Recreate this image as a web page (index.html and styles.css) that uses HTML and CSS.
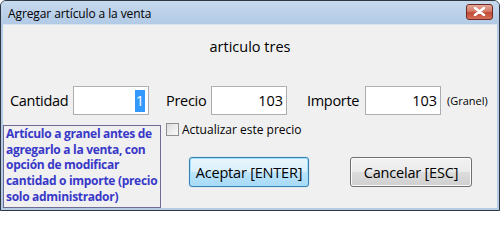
FILE: index.html
```html
<!DOCTYPE html>
<html lang="es">
<head>
<meta charset="utf-8">
<title>Agregar artículo a la venta</title>
<link rel="stylesheet" href="styles.css">
</head>
<body>
<div class="window">
  <div class="titlebar">
    <span class="title">Agregar artículo a la venta</span>
    <span class="close"><svg width="13" height="9" viewBox="0 0 13 9"><path d="M2 1 L11 8 M11 1 L2 8" stroke="#fff" stroke-width="2.4" stroke-linecap="round"/></svg></span>
  </div>
  <div class="content">
    <div class="heading">articulo tres</div>
    <div class="row">
      <span class="lbl lbl-cant">Cantidad</span>
      <span class="field"><span class="sel">1</span></span>
      <span class="lbl lbl-precio">Precio</span>
      <span class="field">103</span>
      <span class="lbl lbl-imp">Importe</span>
      <span class="field">103</span>
      <span class="granel">(Granel)</span>
    </div>
    <div class="lower">
      <div class="note">Artículo a granel antes de<br>agregarlo a la venta, con<br>opción de modificar<br>cantidad o importe (precio<br>solo administrador)</div>
      <div class="actions">
        <label class="check"><span class="box"></span>Actualizar este precio</label>
        <div class="buttons">
          <span class="btn btn-default">Aceptar [ENTER]</span>
          <span class="btn">Cancelar [ESC]</span>
        </div>
      </div>
    </div>
  </div>
</div>
</body>
</html>
```

FILE: styles.css
```css
html, body {
  margin: 0;
  padding: 0;
  background: #ffffff;
}
body {
  font-family: "Open Sans", "Noto Sans", sans-serif;
  color: #000;
}
.window {
  width: 500px;
  height: 211px;
  box-sizing: border-box;
  border: 1px solid #2f3640;
  border-radius: 6px 6px 0 0;
  background: #b4cbe6;
  display: flex;
  flex-direction: column;
  padding: 0 2px 2px 2px;
  overflow: hidden;
}
.titlebar {
  height: 23px;
  flex: none;
  display: flex;
  align-items: center;
  justify-content: space-between;
  background: linear-gradient(#c6d9ee, #b2cae5);
  margin: 0 -2px;
  padding: 0 6px 0 7px;
}
.title {
  font-size: 12px;
  color: #000;
  letter-spacing: -0.1px;
  margin-top: 1px;
}
.close {
  width: 27px;
  height: 16px;
  margin-top: -2px;
  box-sizing: border-box;
  border: 1px solid #6e2a22;
  border-radius: 3px;
  background: linear-gradient(#e8a898 0%, #d47a68 45%, #c04a36 55%, #d67058 100%);
  display: flex;
  align-items: center;
  justify-content: center;
}
.content {
  flex: 1;
  background: #f0f0f0;
  border-top: 1px solid #d8e4f2;
  display: flex;
  flex-direction: column;
  position: relative;
}
.heading {
  text-align: center;
  font-size: 14.5px;
  line-height: 20px;
  margin-top: 12px;
}
.row {
  display: flex;
  align-items: center;
  height: 29px;
  margin-top: 29px;
  padding-left: 7px;
  font-size: 14.5px;
}
.lbl {
  flex: none;
  white-space: nowrap;
  letter-spacing: -0.3px;
}
.lbl-cant { width: 63px; }
.lbl-precio { width: 45px; margin-left: 17px; }
.lbl-imp { width: 58px; margin-left: 20px; }
.field {
  flex: none;
  width: 76px;
  height: 29px;
  box-sizing: border-box;
  border: 1px solid #abadb3;
  border-top-color: #adb2b5;
  background: #fff;
  display: flex;
  align-items: center;
  justify-content: flex-end;
  padding-right: 3px;
}
.sel {
  background: #3399ff;
  color: #fff;
  padding: 0 1px;
  line-height: 22px;
}
.granel {
  font-size: 11px;
  margin-left: 6px;
}
.lower {
  display: grid;
  grid-template-columns: 158px 1fr;
  margin-top: 8px;
  flex: 1;
}
.note {
  margin-top: 2px;
  border: 1px solid #6c6c94;
  color: #3838c8;
  font-family: "Open Sans", "Noto Sans", sans-serif;
  font-weight: bold;
  font-size: 12px;
  letter-spacing: -0.3px;
  line-height: 15.7px;
  padding: 0 1px 0 2px;
  white-space: nowrap;
  overflow: hidden;
}
.actions {
  padding-left: 5px;
  display: flex;
  flex-direction: column;
}
.check {
  display: flex;
  align-items: center;
  font-size: 12px;
  height: 13px;
  margin-top: 0;
}
.box {
  width: 13px;
  height: 13px;
  box-sizing: border-box;
  border: 1px solid #8f8f8f;
  background: linear-gradient(135deg, #dcdcdc, #fbfbfb);
  margin-right: 3px;
}
.buttons {
  display: flex;
  margin-top: 21px;
  padding-left: 23px;
}
.btn {
  width: 122px;
  height: 30px;
  box-sizing: border-box;
  border: 1px solid #707070;
  border-radius: 3px;
  background: linear-gradient(#f2f2f2 0%, #ebebeb 49%, #dddddd 50%, #cfcfcf 100%);
  box-shadow: inset 0 0 0 1px #fbfbfb;
  display: flex;
  align-items: center;
  justify-content: center;
  font-size: 14.5px;
  letter-spacing: -0.2px;
}
.btn-default {
  width: 120px;
  margin-right: 41px;
  border-color: #3c7fb1;
  background: linear-gradient(#eaf6fd 0%, #d9f0fc 49%, #bee6fd 50%, #a7d9f5 100%);
  box-shadow: inset 0 0 0 1px #9fe0fb, 0 0 1px #58c0f0;
}
```
